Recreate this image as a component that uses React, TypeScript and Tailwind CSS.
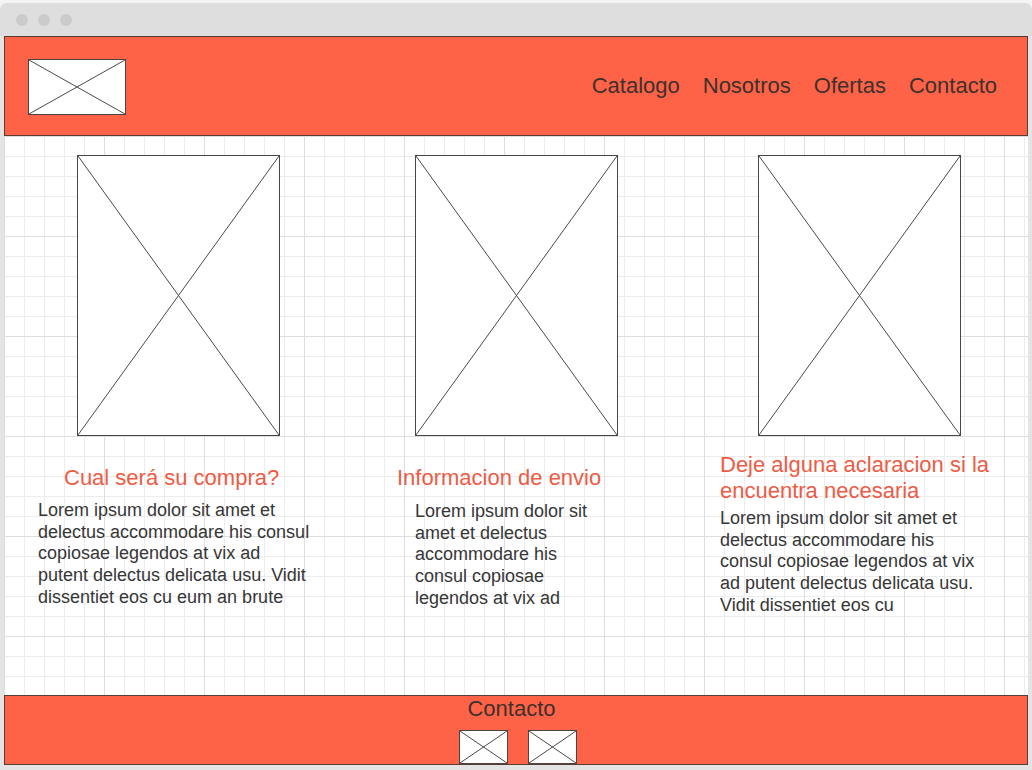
import React from "react";

function XBox({ className }: { className: string }) {
  return (
    <div className={`relative shrink-0 bg-white border border-[#4a4442] ${className}`}>
      <svg className="absolute inset-0 h-full w-full" viewBox="0 0 100 100" preserveAspectRatio="none">
        <line x1="0" y1="0" x2="100" y2="100" stroke="#4e4846" strokeWidth="1" vectorEffect="non-scaling-stroke" />
        <line x1="100" y1="0" x2="0" y2="100" stroke="#4e4846" strokeWidth="1" vectorEffect="non-scaling-stroke" />
      </svg>
    </div>
  );
}

const font = "font-['Liberation_Sans',Arial,sans-serif]";

export default function App() {
  return (
    <div className={`w-[1032px] h-[770px] bg-[#f4f4f4] pt-[3px] overflow-hidden ${font}`}>
      <div className="flex h-[767px] flex-col rounded-t-[7px] bg-[#e4e4e4] px-[4px]">
        {/* title bar */}
        <div className="flex h-[33px] shrink-0 items-center gap-[10px] pl-[16px] -mx-[4px] rounded-t-[7px] bg-[#dedede]">
          <div className="h-[12px] w-[12px] rounded-full bg-[#cbcbcb]" />
          <div className="h-[12px] w-[12px] rounded-full bg-[#cbcbcb]" />
          <div className="h-[12px] w-[12px] rounded-full bg-[#cbcbcb]" />
        </div>

        {/* header */}
        <div className="flex h-[100px] shrink-0 items-center justify-between border border-[#5a3c33] bg-[#ff6347] pl-[23px] pr-[30px]">
          <XBox className="w-[98px] h-[56px] mt-[2px]" />
          <nav className="flex items-center gap-[23px] pl-[1px] text-[22px] leading-[26px] text-[#3e302c]">
            <span>Catalogo</span>
            <span>Nosotros</span>
            <span>Ofertas</span>
            <span>Contacto</span>
          </nav>
        </div>

        {/* content */}
        <div className="relative flex h-[559px] shrink-0 bg-white bg-[linear-gradient(to_right,#dedede_1px,transparent_1px),linear-gradient(to_bottom,#dedede_1px,transparent_1px),linear-gradient(to_right,#ececec_1px,transparent_1px),linear-gradient(to_bottom,#ececec_1px,transparent_1px)] bg-[size:100px_100px,100px_100px,20px_20px,20px_20px]">
          {/* col 1 */}
          <div className="flex w-[340px] shrink-0 flex-col">
            <XBox className="ml-[73px] mt-[19px] w-[203px] h-[281px]" />
            <h2 className="ml-[60px] mt-[29px] text-[22px] leading-[26px] text-[#ee5b45] font-normal">
              Cual será su compra?
            </h2>
            <p className="ml-[34px] mt-[9px] w-[274px] text-[18px] leading-[21.7px] text-[#363636]">
              Lorem ipsum dolor sit amet et delectus accommodare his consul copiosae legendos at vix ad putent
              delectus delicata usu. Vidit dissentiet eos cu eum an brute
            </p>
          </div>

          {/* col 2 */}
          <div className="flex w-[340px] shrink-0 flex-col">
            <XBox className="ml-[71px] mt-[19px] w-[203px] h-[281px]" />
            <h2 className="ml-[53px] mt-[29px] text-[22px] leading-[26px] text-[#ee5b45] font-normal">
              Informacion de envio
            </h2>
            <p className="ml-[71px] mt-[10px] w-[190px] text-[18px] leading-[21.7px] text-[#363636]">
              Lorem ipsum dolor sit amet et delectus accommodare his consul copiosae legendos at vix ad
            </p>
          </div>

          {/* col 3 */}
          <div className="flex w-[344px] shrink-0 flex-col">
            <XBox className="ml-[74px] mt-[19px] w-[203px] h-[281px]" />
            <h2 className="ml-[36px] mt-[16px] w-[285px] text-[22px] leading-[26px] text-[#ee5b45] font-normal">
              Deje alguna aclaracion si la encuentra necesaria
            </h2>
            <p className="ml-[36px] mt-[4px] w-[266px] text-[18px] leading-[21.7px] text-[#363636]">
              Lorem ipsum dolor sit amet et delectus accommodare his consul copiosae legendos at vix ad putent
              delectus delicata usu. Vidit dissentiet eos cu
            </p>
          </div>
        </div>

        {/* footer */}
        <div className="flex h-[70px] shrink-0 flex-col items-center border border-[#5a3c33] bg-[#ff6347]">
          <div className="-ml-[9px] text-[22px] leading-[26px] text-[#3e302c]">Contacto</div>
          <div className="ml-[4px] mt-[8px] flex gap-[20px]">
            <XBox className="w-[49px] h-[34px]" />
            <XBox className="w-[49px] h-[34px]" />
          </div>
        </div>
      </div>
    </div>
  );
}
